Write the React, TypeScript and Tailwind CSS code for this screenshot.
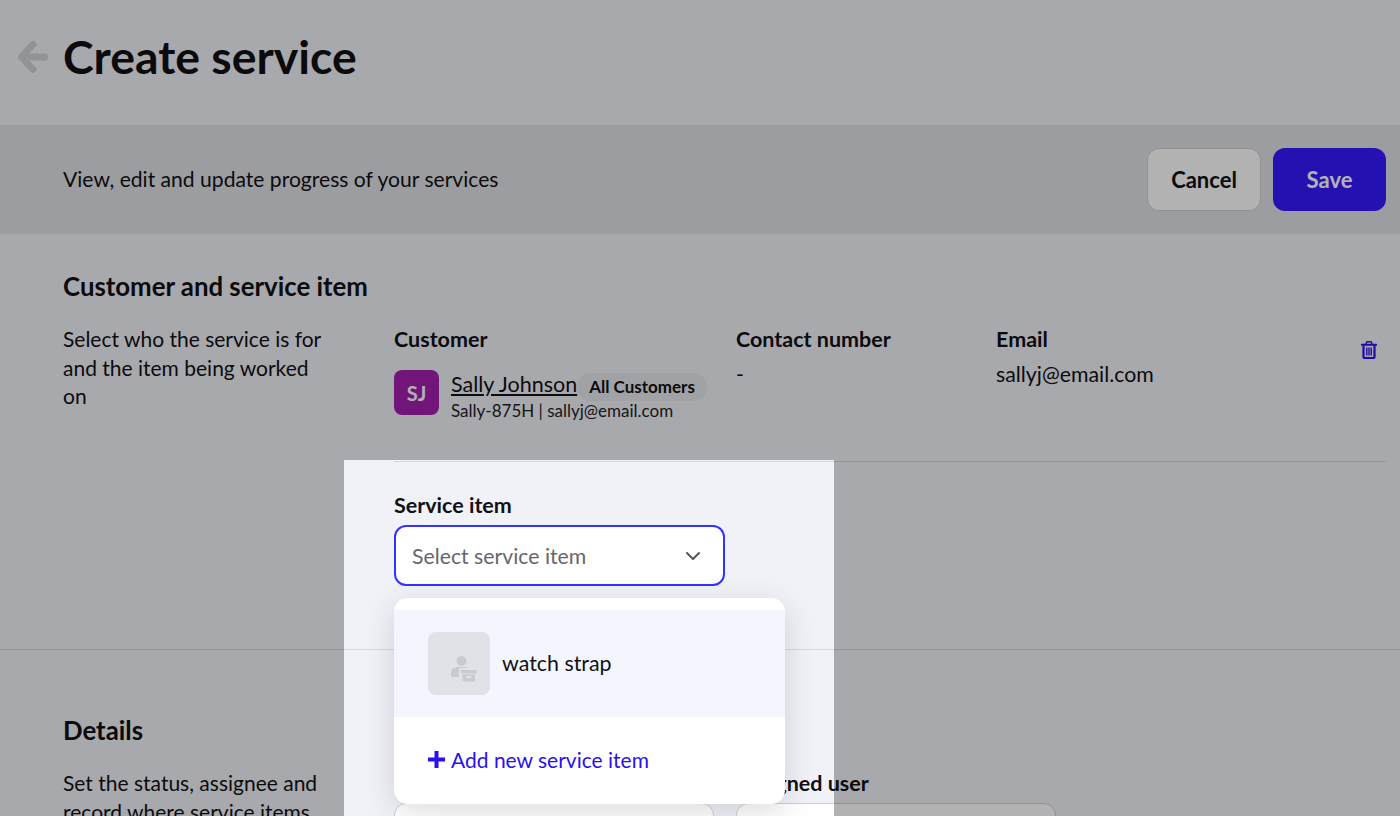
import React from 'react';

const lato = { fontFamily: 'Lato, sans-serif' };

const TrashIcon = () => (
    <svg width="16" height="18" viewBox="0 0 16 18" className="text-[#2a0ff0]" fill="none" stroke="currentColor">
        <path d="M.8 3.800h14.400" strokeWidth="2" strokeLinecap="round" />
        <path d="M5.200 3.500V2.200C5.200 1.400 5.800.8 6.600.8h2.800c.8 0 1.400.6 1.400 1.400v1.300" strokeWidth="1.500" />
        <path d="M2.500 4.500v11.300c0 .8.6 1.400 1.400 1.400h8.200c.8 0 1.400-.6 1.400-1.400V4.500" strokeWidth="2.200" />
        <path d="M5.800 6.500v8M8 6.500v8M10.200 6.500v8" strokeWidth="1.400" />
    </svg>
);

const ItemIcon = () => (
    <svg width="26" height="26" viewBox="0 0 26 26" fill="#c9cad0">
        <circle cx="10.500" cy="5" r="5" />
        <path d="M0 21v-4c0-3.500 3-6 7-6h6c1.500 0 2.800.4 4 1H9.500C8.500 12 8 12.700 8 13.500V21H0z" />
        <path d="M10 14h15.500v3.500H10z" />
        <path d="M11.500 18.500H24V25.500H11.500zM15 20v2h5.500v-2z" fillRule="evenodd" />
    </svg>
);

const Label: React.FC<{ children: React.ReactNode }> = ({ children }) => (
    <div className="text-[21.500px] leading-[28px] font-bold text-[#111114]">{children}</div>
);

export default function App() {
    return (
        <div className="relative h-[816px] overflow-hidden bg-[#f1f2f8] text-[#111114]" style={lato}>
            <header className="flex h-[125px] items-center pb-[12px] pl-[18px]">
                <svg width="30" height="34" viewBox="0 0 30 34" fill="none" stroke="#d2d3d9" strokeWidth="7" strokeLinecap="round" strokeLinejoin="round">
                    <path d="M26.500 17H5M15 4.500L3.500 17 15 29.500" />
                </svg>
                <h1 className="ml-[15px] text-[46.400px] font-bold leading-none">Create service</h1>
            </header>

            <div className="flex h-[109px] items-center justify-between bg-[#e0e1e6] pl-[63px] pr-[14px]">
                <p className="mb-[1px] text-[21.100px]">View, edit and update progress of your services</p>
                <div className="flex gap-3">
                    <button className="h-[63px] w-[114px] rounded-[12px] border-[1.500px] border-[#d0d0d4] bg-white text-[22px] font-bold text-[#111114]">Cancel</button>
                    <button className="h-[63px] w-[113px] rounded-[12px] bg-[#3517ff] text-[22px] font-bold text-white">Save</button>
                </div>
            </div>

            <section className="h-[416px] border-b border-[#d6d7dc] pl-[63px] pr-[14px] pt-[37px]">
                <h2 className="text-[25.800px] font-bold leading-[30px]">Customer and service item</h2>
                <div className="mt-[24px] flex">
                    <p className="w-[331px] pr-[60px] text-[21px] leading-[28.500px]">Select who the service is for and the item being worked on</p>
                    <div className="flex-1">
                        <div className="flex h-[137px] border-b border-[#d6d7dc]">
                            <div className="w-[342px]">
                                <Label>Customer</Label>
                                <div className="mt-[17px] flex gap-[12px]">
                                    <div className="flex h-[45px] w-[45px] items-center justify-center rounded-[8px] bg-[#a21fb0] text-[20px] font-bold text-white">SJ</div>
                                    <div>
                                        <div className="flex h-[28px] items-center">
                                            <span className="text-[21.500px] underline">Sally Johnson</span>
                                            <span className="mt-[5px] rounded-full bg-[#e7e8ec] px-3 py-[3px] text-[17px] font-bold leading-[22px]">All Customers</span>
                                        </div>
                                        <div className="mt-[1px] text-[17px] leading-[24px] text-[#222226]">Sally-875H | sallyj@email.com</div>
                                    </div>
                                </div>
                            </div>
                            <div className="w-[260px]">
                                <Label>Contact number</Label>
                                <div className="mt-[6px] text-[21.300px]">-</div>
                            </div>
                            <div className="flex-1">
                                <Label>Email</Label>
                                <div className="mt-[6px] text-[21.300px]">sallyj@email.com</div>
                            </div>
                            <div className="mr-[9px] mt-[16px]"><TrashIcon /></div>
                        </div>
                        <div className="mt-[29px]">
                            <Label>Service item</Label>
                            <div className="mt-[6px] flex h-[61px] w-[331px] items-center justify-between rounded-[12px] border-2 border-[#3333ff] bg-white pl-[16px] pr-[22px]">
                                <span className="mt-[2px] text-[21.250px] text-[#66666c]">Select service item</span>
                                <svg width="16" height="10" viewBox="0 0 16 10" fill="none" stroke="#55555b" strokeWidth="2" strokeLinecap="round" strokeLinejoin="round">
                                    <path d="M2 2l6 6 6-6" />
                                </svg>
                            </div>
                        </div>
                    </div>
                </div>
            </section>

            <section className="pl-[63px] pt-[65px]">
                <h2 className="text-[25.800px] font-bold leading-[30px]">Details</h2>
                <div className="mt-[24px] flex">
                    <p className="w-[331px] pr-[60px] text-[21px] leading-[28.500px]">Set the status, assignee and record where service items are kept</p>
                    <div className="flex gap-[22px]">
                        <div className="w-[320px]">
                            <Label>Status</Label>
                            <div className="mt-[6px] h-[60px] rounded-[12px] border-[1.500px] border-[#d0d0d4] bg-white" />
                        </div>
                        <div className="w-[320px]">
                            <Label>Assigned user</Label>
                            <div className="mt-[6px] h-[60px] rounded-[12px] border-[1.500px] border-[#d0d0d4] bg-white" />
                        </div>
                    </div>
                </div>
            </section>

            {/* dropdown sits over the form */}
            <div className="absolute left-[394px] top-[598px] h-[206px] w-[391px] rounded-[14px] bg-white pt-[12px] shadow-[0_8px_32px_rgba(0,0,0,0.14)]">
                <div className="flex h-[107px] items-center gap-[12px] bg-[#f3f5ff] pl-[34px]">
                    <div className="flex h-[63px] w-[62px] items-end justify-center rounded-[8px] bg-[#e1e2e7] pb-[13px] pl-[9px]">
                        <ItemIcon />
                    </div>
                    <span className="text-[21.400px]">watch strap</span>
                </div>
                <div className="mt-[27px] flex items-center gap-[6px] pl-[34px] text-[21px] text-[#2a0ff0]">
                    <svg width="17" height="17" viewBox="0 0 17 17" fill="none" stroke="currentColor" strokeWidth="4" strokeLinecap="square">
                        <path d="M8.500 2v13M2 8.500h13" />
                    </svg>
                    Add new service item
                </div>
            </div>

            {/* dim everything except the spotlight */}
            <div className="pointer-events-none absolute left-[344px] top-[460px] h-[400px] w-[490px] shadow-[0_0_0_2000px_rgba(0,0,0,0.3)]" />
        </div>
    );
}
